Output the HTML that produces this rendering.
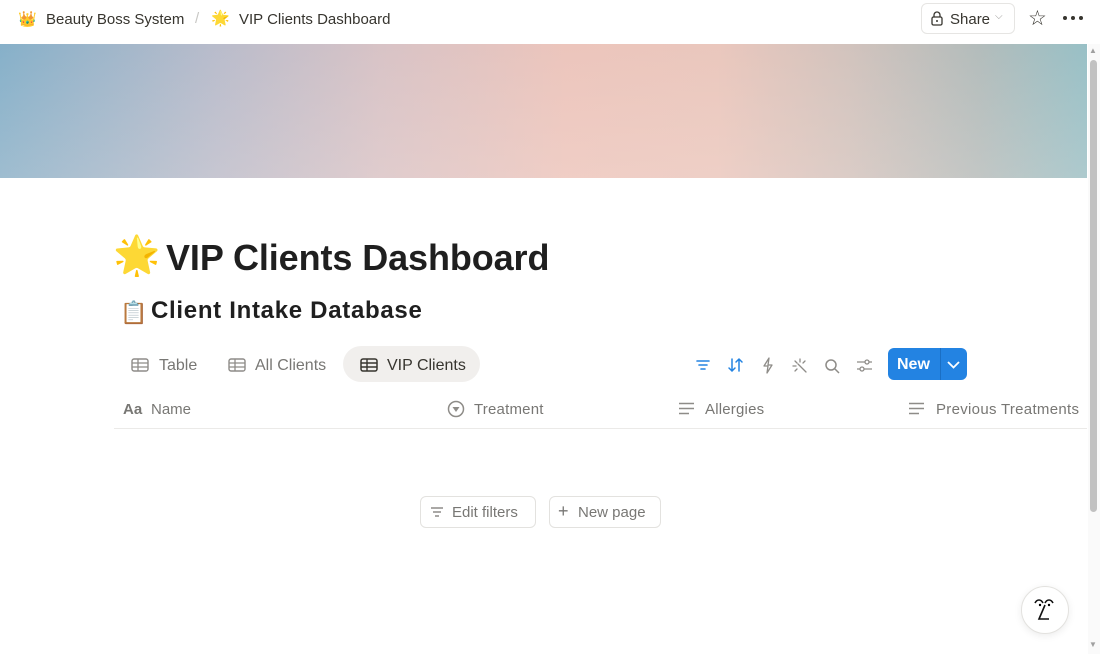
<!DOCTYPE html><html><head><style>
*{margin:0;padding:0;box-sizing:border-box}
body{width:1100px;height:654px;overflow:hidden;background:#fff;font-family:"Liberation Sans",sans-serif;color:#37352f;position:relative}
.a{position:absolute;white-space:nowrap}
.banner{position:absolute;left:0;top:44px;width:1087px;height:134px;background:
linear-gradient(180deg,rgba(255,255,255,0) 0%,rgba(255,240,235,.2) 100%),
linear-gradient(90deg,#86b0c9 0%,#b9bccb 20%,#d8c3c6 35%,#ecc5bc 52%,#eac7bd 66%,#d2c3bd 78%,#b3bcbb 90%,#98c0c6 100%)}
.g{color:#787774}
svg{display:block}
</style></head><body>
<div class="a" style="left:18px;top:10px;font-size:15px">👑</div>
<div class="a" style="left:46px;top:11px;font-size:15px;color:#37352f">Beauty Boss System</div>
<div class="a" style="left:195px;top:10px;font-size:15px;color:#c8c7c4">/</div>
<div class="a" style="left:211px;top:9px;font-size:15px">🌟</div>
<div class="a" style="left:239px;top:11px;font-size:15px">VIP Clients Dashboard</div>
<div class="a" style="left:921px;top:3px;width:94px;height:31px;border:1px solid #e6e5e3;border-radius:6px"></div>
<svg class="a" style="left:930px;top:10px" width="14" height="16" viewBox="0 0 14 16"><rect x="2" y="7" width="10" height="8" rx="1.5" fill="none" stroke="#37352f" stroke-width="1.3"/><path d="M4 7V5a3 3 0 0 1 6 0v2" fill="none" stroke="#37352f" stroke-width="1.3"/><circle cx="7" cy="11" r="1" fill="#37352f"/></svg>
<div class="a" style="left:950px;top:11px;font-size:15px">Share</div>
<div class="a" style="left:995px;top:11px;font-size:10px;color:#9b9a97">⌵</div>
<div class="a" style="left:1028px;top:6px;font-size:21px">☆</div>
<svg class="a" style="left:1062px;top:15px" width="22" height="6" viewBox="0 0 22 6"><circle cx="3" cy="3" r="2" fill="#37352f"/><circle cx="11" cy="3" r="2" fill="#37352f"/><circle cx="19" cy="3" r="2" fill="#37352f"/></svg>
<div class="banner"></div>
<div class="a" style="left:1088px;top:44px;width:12px;height:610px;background:#fafafa"></div>
<div class="a" style="left:1090px;top:60px;width:7px;height:452px;background:#c1c1c1;border-radius:4px"></div>
<div class="a" style="left:1089px;top:46px;font-size:8px;color:#a0a0a0">▲</div>
<div class="a" style="left:1089px;top:640px;font-size:8px;color:#a0a0a0">▼</div>
<div class="a" style="left:113px;top:234px;font-size:38px">🌟</div>
<div class="a" style="left:166px;top:237px;font-size:36px;font-weight:bold;color:#1f1f1f;letter-spacing:-0.1px">VIP Clients Dashboard</div>
<div class="a" style="left:120px;top:300px;font-size:22px">📋</div>
<div class="a" style="left:151px;top:297px;font-size:24px;font-weight:bold;color:#1f1f1f;letter-spacing:0.7px">Client Intake Database</div>
<div class="a" style="left:343px;top:346px;width:137px;height:36px;background:#f1efed;border-radius:18px"></div>
<svg class="a" style="left:131px;top:358px" width="18" height="14" viewBox="0 0 18 14"><rect x="1" y="1" width="16" height="12" rx="2" fill="none" stroke="#8e8c88" stroke-width="1.4"/><path d="M1 5h16M1 9h16M7 1v12" stroke="#8e8c88" stroke-width="1.3"/></svg>
<div class="a g" style="left:159px;top:357px;font-size:16px">Table</div>
<svg class="a" style="left:228px;top:358px" width="18" height="14" viewBox="0 0 18 14"><rect x="1" y="1" width="16" height="12" rx="2" fill="none" stroke="#8e8c88" stroke-width="1.4"/><path d="M1 5h16M1 9h16M7 1v12" stroke="#8e8c88" stroke-width="1.3"/></svg>
<div class="a g" style="left:255px;top:357px;font-size:16px">All Clients</div>
<svg class="a" style="left:360px;top:358px" width="18" height="14" viewBox="0 0 18 14"><rect x="1" y="1" width="16" height="12" rx="2" fill="none" stroke="#37352f" stroke-width="1.5"/><path d="M1 5h16M1 9h16M7 1v12" stroke="#37352f" stroke-width="1.4"/></svg>
<div class="a" style="left:387px;top:357px;font-size:16px">VIP Clients</div>
<svg class="a" style="left:695px;top:358px" width="16" height="14" viewBox="0 0 16 14"><path d="M2 3h12M4 7h8M6 11h4" stroke="#2383e2" stroke-width="1.6" stroke-linecap="round"/></svg>
<svg class="a" style="left:727px;top:357px" width="18" height="16" viewBox="0 0 18 16"><path d="M5 2v12M2 11l3 3 3-3M12 14V2M9 5l3-3 3 3" fill="none" stroke="#2383e2" stroke-width="1.5" stroke-linecap="round"/></svg>
<svg class="a" style="left:761px;top:357px" width="14" height="17" viewBox="0 0 14 17"><path d="M8 1L3 9h4l-1 7 5-8H7z" fill="none" stroke="#8e8c88" stroke-width="1.3" stroke-linejoin="round"/></svg>
<svg class="a" style="left:792px;top:358px" width="16" height="16" viewBox="0 0 16 16"><path d="M6 6l8 8M8 1v3M3 3l2 2M1 8h3M13 3l-2 2M3 13l2-2" stroke="#8e8c88" stroke-width="1.3" stroke-linecap="round"/></svg>
<svg class="a" style="left:824px;top:358px" width="16" height="16" viewBox="0 0 16 16"><circle cx="7" cy="7" r="5" fill="none" stroke="#8e8c88" stroke-width="1.5"/><path d="M11 11l4 4" stroke="#8e8c88" stroke-width="1.5"/></svg>
<svg class="a" style="left:856px;top:358px" width="17" height="15" viewBox="0 0 17 15"><path d="M1 4h15M1 11h15" stroke="#8e8c88" stroke-width="1.3"/><circle cx="11" cy="4" r="2" fill="#fff" stroke="#8e8c88" stroke-width="1.3"/><circle cx="6" cy="11" r="2" fill="#fff" stroke="#8e8c88" stroke-width="1.3"/></svg>
<div class="a" style="left:888px;top:348px;width:79px;height:32px;background:#2383e2;border-radius:6px"></div>
<div class="a" style="left:940px;top:348px;width:1px;height:32px;background:#1a6fc4"></div>
<div class="a" style="left:897px;top:356px;font-size:16px;font-weight:bold;color:#fff">New</div>
<svg class="a" style="left:947px;top:361px" width="13" height="8" viewBox="0 0 13 8"><path d="M1 1l5.5 5.5L12 1" fill="none" stroke="#fff" stroke-width="1.8"/></svg>
<div class="a g" style="left:123px;top:401px;font-size:15px;font-weight:bold">Aa</div>
<div class="a g" style="left:151px;top:401px;font-size:15px">Name</div>
<svg class="a" style="left:447px;top:400px" width="18" height="18" viewBox="0 0 18 18"><circle cx="9" cy="9" r="7.5" fill="none" stroke="#8e8c88" stroke-width="1.5"/><path d="M5.5 7h7L9 12z" fill="#8e8c88"/></svg>
<div class="a g" style="left:474px;top:401px;font-size:15px;letter-spacing:0.2px">Treatment</div>
<svg class="a" style="left:678px;top:402px" width="17" height="13" viewBox="0 0 17 13"><path d="M1 1.5h15M1 6.5h15M1 11.5h10" stroke="#8e8c88" stroke-width="1.6"/></svg>
<div class="a g" style="left:705px;top:401px;font-size:15px;letter-spacing:0.2px">Allergies</div>
<svg class="a" style="left:908px;top:402px" width="17" height="13" viewBox="0 0 17 13"><path d="M1 1.5h15M1 6.5h15M1 11.5h10" stroke="#8e8c88" stroke-width="1.6"/></svg>
<div class="a g" style="left:936px;top:401px;font-size:15px;letter-spacing:0.3px">Previous Treatments</div>
<div class="a" style="left:114px;top:428px;width:973px;height:1px;background:#ebeae8"></div>
<div class="a" style="left:420px;top:496px;width:116px;height:32px;border:1px solid #e3e2df;border-radius:6px"></div>
<svg class="a" style="left:430px;top:506px" width="14" height="12" viewBox="0 0 14 12"><path d="M1 2h12M3 6h8M5 10h4" stroke="#8e8c88" stroke-width="1.5"/></svg>
<div class="a g" style="left:452px;top:504px;font-size:15px">Edit filters</div>
<div class="a" style="left:549px;top:496px;width:112px;height:32px;border:1px solid #e3e2df;border-radius:6px"></div>
<div class="a g" style="left:558px;top:501px;font-size:18px">+</div>
<div class="a g" style="left:578px;top:504px;font-size:15px">New page</div>
<div class="a" style="left:1021px;top:586px;width:48px;height:48px;border-radius:50%;border:1px solid #e3e2df;background:#fff;box-shadow:0 2px 8px rgba(0,0,0,.08)"></div>
<svg class="a" style="left:1033px;top:597px" width="24" height="26" viewBox="0 0 24 26"><path d="M2 6c2-4 6-4 8 0M12 6c2-4 6-4 8 0M12 8L6 22h10" fill="none" stroke="#111" stroke-width="1.6"/><circle cx="7" cy="8" r="1.2"/><circle cx="16" cy="8" r="1.2"/></svg>
</body></html>
